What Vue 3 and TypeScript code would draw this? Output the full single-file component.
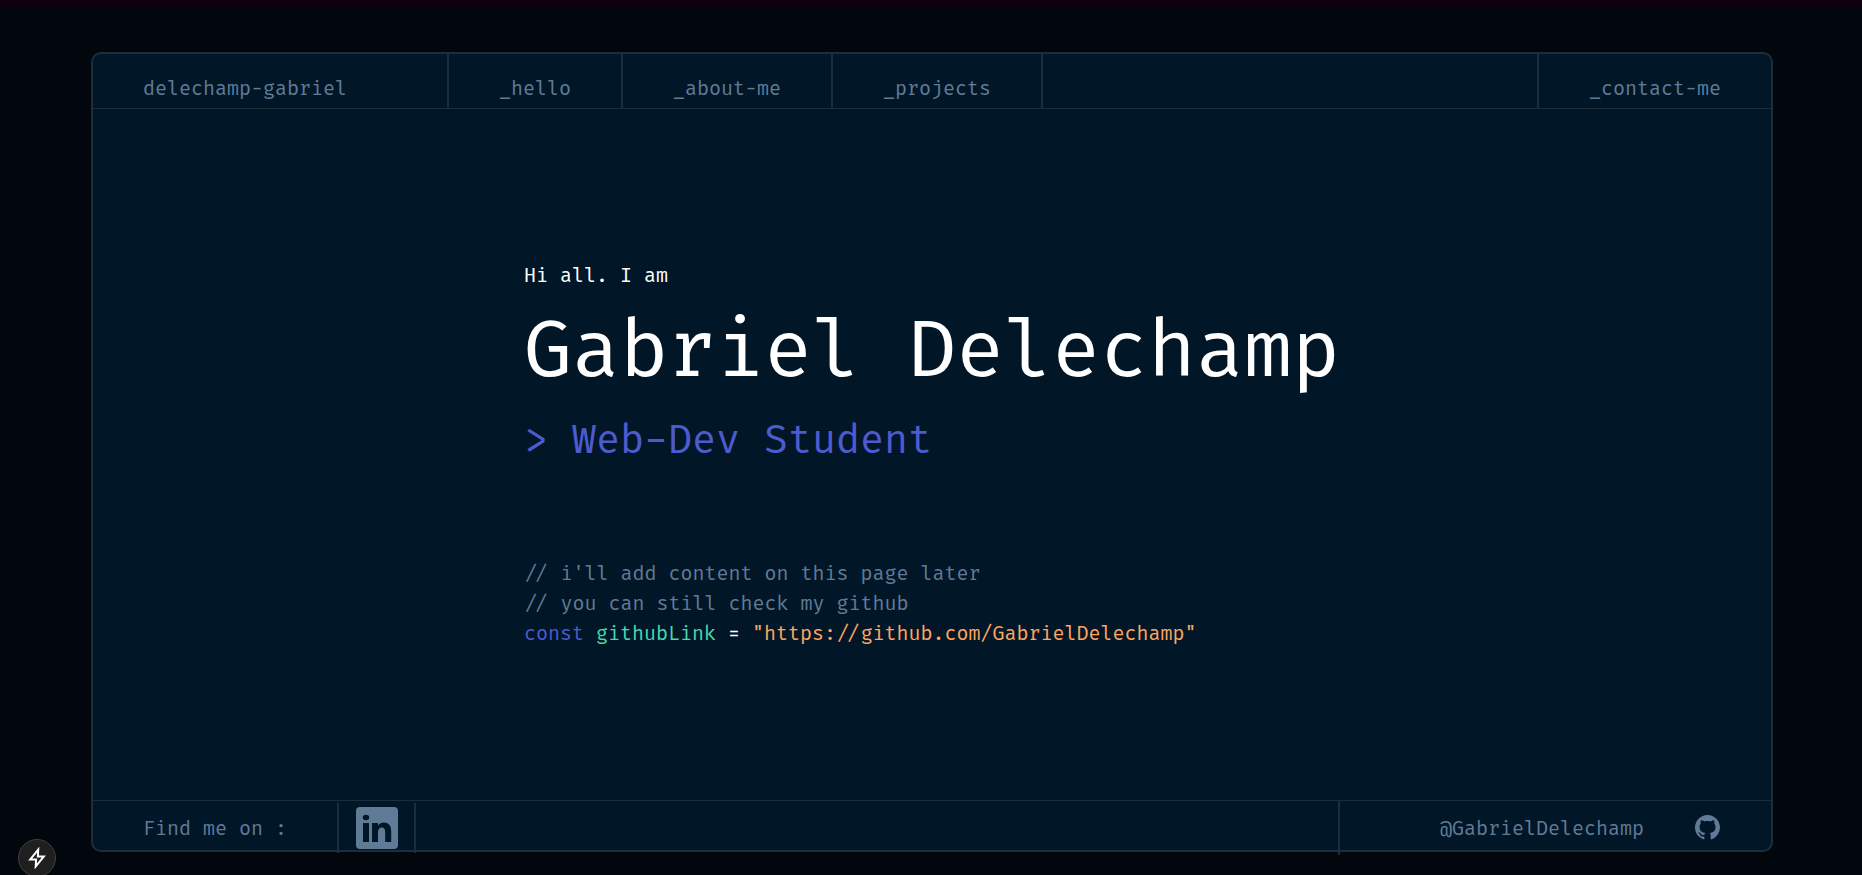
<script setup lang="ts">
interface NavItem {
  label: string
  href: string
}

const navItems: NavItem[] = [
  { label: '_hello', href: '#hello' },
  { label: '_about-me', href: '#about-me' },
  { label: '_projects', href: '#projects' },
]

const comments: string[] = ["i'll add content on this page later", 'you can still check my github']

const githubPath = 'github.com/GabrielDelechamp'
const githubUrl = `https://${githubPath}`
</script>

<template>
  <div class="page">
    <div class="window">
      <header class="header">
        <a class="cell brand" href="#home">delechamp-gabriel</a>
        <nav class="nav">
          <a v-for="item in navItems" :key="item.label" class="cell" :href="item.href">{{ item.label }}</a>
        </nav>
        <a class="cell contact" href="#contact-me">_contact-me</a>
      </header>

      <main class="main">
        <div class="hero">
          <p class="greeting">Hi all. I am</p>
          <h1 class="name">Gabriel Delechamp</h1>
          <h2 class="role">&gt; Web-Dev Student</h2>
          <div class="code">
            <p v-for="comment in comments" :key="comment" class="comment"><span class="ligature">//</span> {{ comment }}</p>
            <p>
              <span class="keyword">const</span> <span class="variable">githubLink</span> =
              <a class="string" :href="githubUrl">"https:<span class="ligature">//</span>{{ githubPath }}"</a>
            </p>
          </div>
        </div>
      </main>

      <footer class="footer">
        <span class="find">Find me on :</span>
        <a class="linkedin" href="#linkedin" aria-label="LinkedIn">
          <svg viewBox="0 0 42 42" width="42" height="42">
            <path
              fill="currentColor"
              fill-rule="evenodd"
              d="M4 0H38a4 4 0 0 1 4 4V38a4 4 0 0 1-4 4H4a4 4 0 0 1-4-4V4a4 4 0 0 1 4-4zM7 16V35H13V16zM10 7.700a3.200 2.800 0 1 0 0 5.600a3.200 2.800 0 1 0 0-5.600zM16 16V35H22V25.500C22 22.300 23.400 20.600 25.800 20.600C28.200 20.600 29.200 22.300 29.200 25.500V35H35.200V24.300C35.200 18.400 32.300 15.600 28 15.600C25 15.600 23 17 22 18.700V16z"
            />
          </svg>
        </a>
        <a class="github" :href="githubUrl">
          <span>@GabrielDelechamp</span>
          <svg viewBox="0 0 24 24" width="25" height="25" aria-hidden="true">
            <path
              fill="currentColor"
              d="M12 0C5.370 0 0 5.370 0 12c0 5.310 3.435 9.795 8.205 11.385.6.105.825-.255.825-.57 0-.285-.015-1.230-.015-2.235-3.015.555-3.795-.735-4.035-1.410-.135-.345-.72-1.410-1.230-1.695-.42-.225-1.020-.78-.015-.795.945-.015 1.620.87 1.845 1.230 1.080 1.815 2.805 1.305 3.495.99.105-.78.42-1.305.765-1.605-2.670-.3-5.460-1.335-5.460-5.925 0-1.305.465-2.385 1.230-3.225-.12-.3-.54-1.530.12-3.180 0 0 1.005-.315 3.300 1.230.96-.27 1.980-.405 3-.405s2.040.135 3 .405c2.295-1.560 3.300-1.230 3.300-1.230.66 1.650.24 2.880.12 3.180.765.84 1.230 1.905 1.230 3.225 0 4.605-2.805 5.625-5.475 5.925.435.375.81 1.095.81 2.220 0 1.605-.015 2.895-.015 3.300 0 .315.225.69.825.57A12.020 12.020 0 0 0 24 12c0-6.630-5.370-12-12-12z"
            />
          </svg>
        </a>
      </footer>
    </div>

    <button class="indicator" type="button" aria-label="Static route">
      <svg viewBox="0 0 24 24" width="22" height="22" aria-hidden="true">
        <path
          d="M13.300 2.800L4.600 13.600H11L10.600 21.200L19.400 10.400H13z"
          fill="none"
          stroke="#ffffff"
          stroke-width="2.200"
        />
      </svg>
    </button>
  </div>
</template>

<style>
html,
body {
  background: #01080e;
}
</style>

<style scoped>
.page {
  box-sizing: border-box;
  min-height: 100vh;
  display: flex;
  padding: 44px 89px 23px 91px;
  border-top: 8px solid #10000f;
  background: #01070d;
  color: #607b96;
  font-family: 'Fira Mono', 'DejaVu Sans Mono', 'Liberation Mono', monospace;
  font-size: 20px;
  line-height: 30px;
}

a {
  color: inherit;
  text-decoration: none;
}

p,
h1,
h2 {
  margin: 0;
  font-weight: 400;
}

.window {
  flex: 1;
  min-width: 0;
  display: flex;
  flex-direction: column;
  border: 2px solid #1e2d3d;
  border-radius: 10px;
  background: #011627;
}

.header {
  display: flex;
  height: 54px;
  border-bottom: 1px solid #1e2d3d;
}

.nav {
  display: flex;
  flex: 1;
}

.cell {
  padding: 19px 50px 0;
  border-right: 2px solid #1e2d3d;
}

.brand {
  padding-right: 100px;
}

.contact {
  border-right: 0;
  border-left: 2px solid #1e2d3d;
}

.main {
  flex: 1;
  display: flex;
  justify-content: center;
  padding-top: 151px;
}

.name,
.role,
.ligature {
  font-family: 'Fira Code', 'DejaVu Sans Mono', 'Liberation Mono', monospace;
}

.ligature {
  line-height: 0;
}

.greeting {
  color: #ffffff;
}

.name {
  color: #ffffff;
  font-size: 78px;
  line-height: 124px;
}

.role {
  color: #4d5bce;
  font-size: 39px;
  line-height: 54px;
}

.code {
  margin-top: 90px;
  color: #ffffff;
}

.comment {
  color: #607b96;
}

.keyword {
  color: #4d5bce;
}

.variable {
  color: #43d9ad;
}

.string {
  color: #fea55f;
}

.footer {
  display: flex;
  height: 49px;
  border-top: 1px solid #1e2d3d;
}

.find {
  padding: 12px 50px 0;
}

.linkedin {
  display: flex;
  height: 46px;
  margin-top: 2px;
  padding: 4px 16px 0 17px;
  border: solid #1e2d3d;
  border-width: 0 2px;
}

.github {
  display: flex;
  gap: 51px;
  height: 42px;
  margin-left: auto;
  padding: 12px 51px 0 100px;
  border-left: 2px solid #1e2d3d;
}

.github svg {
  margin-top: 2px;
}

.indicator {
  position: fixed;
  left: 18px;
  bottom: -2px;
  display: flex;
  align-items: center;
  justify-content: center;
  width: 38px;
  height: 38px;
  padding: 0;
  border: 1px solid #414141;
  border-radius: 50%;
  background: #1f1f1f;
}
</style>
